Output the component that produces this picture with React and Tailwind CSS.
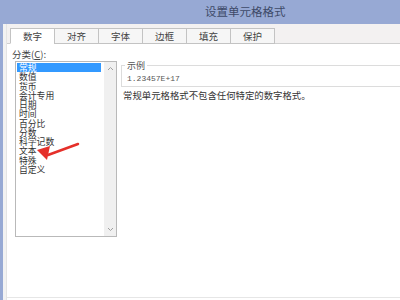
import React from "react";

const items = ["常规","数值","货币","会计专用","日期","时间","百分比","分数","科学记数","文本","特殊","自定义"];
const tabs = ["数字","对齐","字体","边框","填充","保护"];
const cjk = { fontFamily: '"Noto Sans CJK SC", "Noto Sans", sans-serif' };

export default function App() {
  return (
    <div className="w-[400px] h-[300px] overflow-hidden bg-white flex flex-col relative" style={cjk}>
      <div className="h-[24px] bg-[#97a9d4] flex items-center pl-[205px] text-[11.5px] text-[#3e4a68] shrink-0">
        设置单元格格式
      </div>
      <div className="flex flex-1">
        <div className="w-[3px] bg-[#97a9d4]" />
        <div className="w-[4px] bg-[#f2f2f2] border-r border-[#e4e4e4]" />
        <div className="flex-1 flex flex-col">
          <div className="h-[20px] bg-[#f3f1f1] border-b border-[#cfcfcf] flex items-end pl-[3px] shrink-0">
            {tabs.map((t, i) => (
              <div
                key={t}
                className={
                  "w-[45px] h-[16px] -mb-px border border-[#c3c3c3] flex items-center justify-center text-[9.5px] text-[#444] " +
                  (i === 0 ? "bg-white border-b-white" : "bg-[#f6f6f6] -ml-px")
                }
              >
                {t}
              </div>
            ))}
          </div>
          <div className="flex-1 flex relative">
            <div className="flex flex-col pl-[5px] pt-[4px]">
              <div className="text-[9.5px] leading-[12px] text-[#444]">分类(<span className="underline">C</span>):</div>
              <div className="ml-[3px] mt-[1px] w-[102px] h-[176px] border border-[#b9b9b9] flex">
                <div className="flex-1 flex flex-col pt-[1px] pl-[1px]">
                  {items.map((it, i) => (
                    <div
                      key={it}
                      className={
                        "h-[9.27px] leading-[9.27px] text-[8.8px] pl-[2px] w-[84px] " +
                        (i === 0 ? "bg-[#3399ff] text-white" : "text-[#333]")
                      }
                    >
                      {it}
                    </div>
                  ))}
                </div>
                <div className="w-[12px] bg-[#f0f0f0] flex flex-col justify-between items-center py-[4px]">
                  <svg width="7" height="5" viewBox="0 0 7 5"><path d="M1 4 L3.5 1.5 L6 4" fill="none" stroke="#a0a0a0" strokeWidth="1" /></svg>
                  <svg width="7" height="5" viewBox="0 0 7 5"><path d="M1 1 L3.5 3.5 L6 1" fill="none" stroke="#a0a0a0" strokeWidth="1" /></svg>
                </div>
              </div>
            </div>
            <div className="flex-1 flex flex-col pl-[4px] pt-[21px]">
              <div className="border border-[#dcdcdc] border-r-0 h-[22px] relative pl-[5px] pt-[8px]">
                <div className="absolute -top-[6px] left-[3px] bg-white px-[2px] text-[9px] leading-[11px] text-[#555]">示例</div>
                <div className="text-[8px] leading-[9px] text-[#555]" style={{ fontFamily: '"Liberation Mono", monospace' }}>1.23457E+17</div>
              </div>
              <div className="text-[9.4px] leading-[12px] text-[#333] mt-[2px] pl-[2px] whitespace-nowrap">常规单元格格式不包含任何特定的数字格式。</div>
            </div>
          </div>
          <div className="h-[3px] border-t border-[#e6e6e6] shrink-0" />
        </div>
      </div>
      <svg className="absolute left-0 top-0 pointer-events-none" width="400" height="300">
        <line x1="78" y1="144" x2="48" y2="155" stroke="#e5302a" strokeWidth="2.5" strokeLinecap="round" />
        <polygon points="37,150 50,146 47,160" fill="#e5302a" />
      </svg>
    </div>
  );
}
